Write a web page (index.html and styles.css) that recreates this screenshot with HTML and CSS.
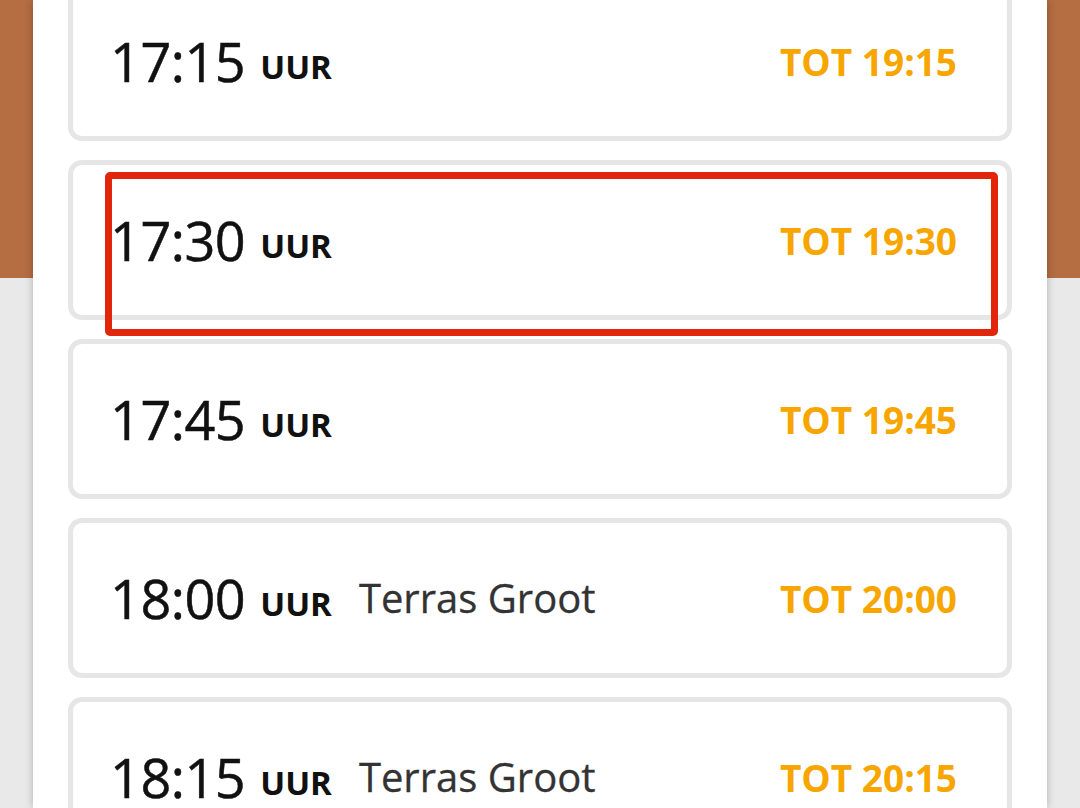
FILE: index.html
```html
<!DOCTYPE html>
<html lang="nl">
<head>
    <meta charset="UTF-8">
    <meta name="viewport" content="width=device-width, initial-scale=1.0">
    <title>Tijdslot kiezen</title>
    <link rel="stylesheet" href="styles.css">
</head>
<body>
    <div class="panel">
        <ul class="slots">
            <li class="slot">
                <span class="time">17:15</span>
                <span class="unit">UUR</span>
                <span class="until">TOT 19:15</span>
            </li>
            <li class="slot selected">
                <span class="time">17:30</span>
                <span class="unit">UUR</span>
                <span class="until">TOT 19:30</span>
                <!-- markering over het gekozen slot -->
                <div class="highlight"></div>
            </li>
            <li class="slot">
                <span class="time">17:45</span>
                <span class="unit">UUR</span>
                <span class="until">TOT 19:45</span>
            </li>
            <li class="slot">
                <span class="time">18:00</span>
                <span class="unit">UUR</span>
                <span class="area">Terras Groot</span>
                <span class="until">TOT 20:00</span>
            </li>
            <li class="slot">
                <span class="time">18:15</span>
                <span class="unit">UUR</span>
                <span class="area">Terras Groot</span>
                <span class="until">TOT 20:15</span>
            </li>
        </ul>
    </div>
</body>
</html>
```

FILE: styles.css
```css
html, body {
    height: 100%;
}

body {
    margin: 0;
    overflow: hidden;
    font-family: "Open Sans", "Noto Sans", sans-serif;
    background: linear-gradient(to bottom, #b56d42 0, #b56d42 278px, #e9e9e9 278px);
}

.panel {
    display: flow-root;
    margin: 0 33px;
    height: 100%;
    padding: 0 35px;
    background-color: #fff;
    box-shadow: 0 0 8px rgba(0, 0, 0, 0.25);
}

.slots {
    list-style: none;
    margin: -19px 0 0;
    padding: 0;
    display: flex;
    flex-direction: column;
    gap: 19px;
}

.slot {
    position: relative;
    display: flex;
    align-items: center;
    flex-shrink: 0;
    height: 160px;
    box-sizing: border-box;
    padding: 0 50px 0 37px;
    border: 5px solid #e6e6e6;
    border-radius: 14px;
    line-height: 1;
    background-color: #fff;
}

.time {
    font-size: 54px;
    color: #111;
    letter-spacing: -0.5px;
    -webkit-text-stroke: 0.5px #111; /* iets voller, zoals in de app */
}

.unit {
    position: relative;
    top: 5px;
    margin-left: 15px;
    font-size: 33px;
    font-weight: 700;
    color: #111;
}

.area {
    margin-left: 27px;
    font-size: 40px;
    color: #333;
    -webkit-text-stroke: 0.3px #333;
}

.until {
    margin-left: auto;
    font-size: 37px;
    font-weight: 700;
    color: #f7a600;
}

.highlight {
    position: absolute;
    left: 32px;
    top: 7px;
    width: 893px;
    height: 164px;
    box-sizing: border-box;
    border: 7px solid #e1260c;
    border-radius: 5px;
}
```
